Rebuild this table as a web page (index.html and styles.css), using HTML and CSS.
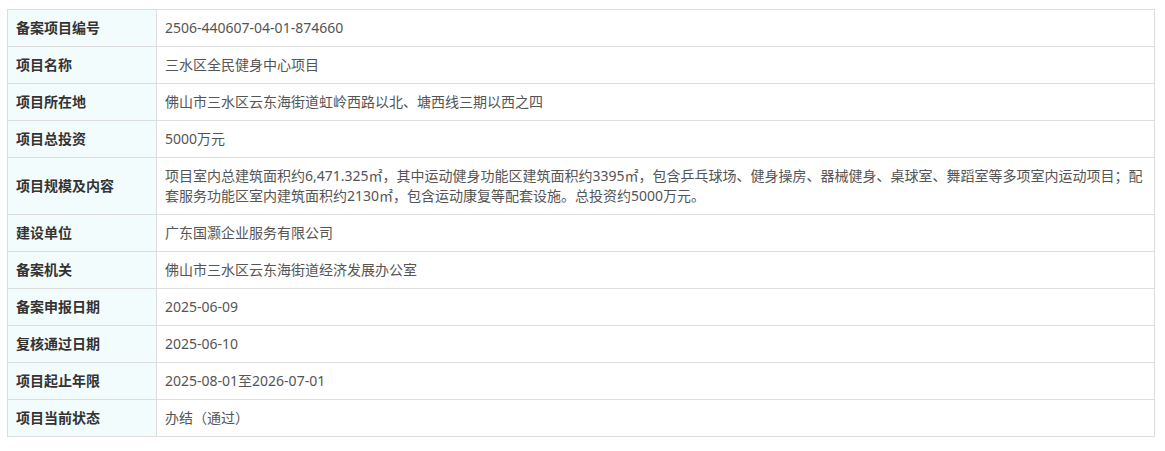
FILE: index.html
```html
<!DOCTYPE html>
<html lang="zh-CN">
<head>
    <meta charset="UTF-8">
    <meta name="viewport" content="width=device-width, initial-scale=1.0">
    <title>项目备案信息</title>
    <link rel="stylesheet" href="styles.css">
</head>
<body>
    <table class="info-table">
        <tr><th>备案项目编号</th><td>2506-440607-04-01-874660</td></tr>
        <tr><th>项目名称</th><td>三水区全民健身中心项目</td></tr>
        <tr><th>项目所在地</th><td>佛山市三水区云东海街道虹岭西路以北、塘西线三期以西之四</td></tr>
        <tr><th>项目总投资</th><td>5000万元</td></tr>
        <tr><th>项目规模及内容</th><td>项目室内总建筑面积约6,471.325㎡，其中运动健身功能区建筑面积约3395㎡，包含乒乓球场、健身操房、器械健身、桌球室、舞蹈室等多项室内运动项目；配套服务功能区室内建筑面积约2130㎡，包含运动康复等配套设施。总投资约5000万元。</td></tr>
        <tr><th>建设单位</th><td>广东国灏企业服务有限公司</td></tr>
        <tr><th>备案机关</th><td>佛山市三水区云东海街道经济发展办公室</td></tr>
        <tr><th>备案申报日期</th><td>2025-06-09</td></tr>
        <tr><th>复核通过日期</th><td>2025-06-10</td></tr>
        <tr><th>项目起止年限</th><td>2025-08-01至2026-07-01</td></tr>
        <tr><th>项目当前状态</th><td>办结（通过）</td></tr>
    </table>
</body>
</html>
```

FILE: styles.css
```css
body {
    margin: 0;
    padding: 9px 10px 0 7px;
    background-color: #fff;
    font-family: "Noto Sans", "Noto Sans CJK SC", sans-serif;
    font-size: 14px;
}
.info-table {
    width: 1148px;
    border-collapse: collapse;
    table-layout: fixed;
}
.info-table th,
.info-table td {
    border: 1px solid #dddddd;
    padding: 8px 8px;
    line-height: 20px;
    text-align: left;
    vertical-align: middle;
}
.info-table th {
    width: 132px;
    background-color: #f3fcfc;
    color: #333;
    font-weight: bold;
}
.info-table td {
    color: #555;
}
```
